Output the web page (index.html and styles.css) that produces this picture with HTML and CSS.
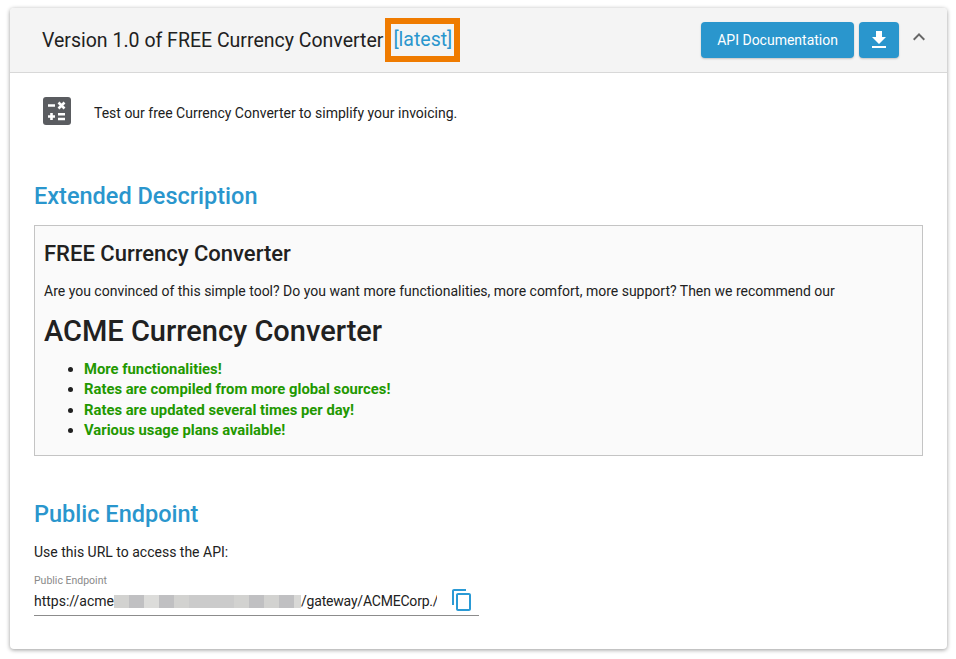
FILE: index.html
```html
<!DOCTYPE html>
<html lang="en" dir="ltr">
  <head>
    <meta charset="utf-8">
    <title>FREE Currency Converter</title>
    <link rel="stylesheet" href="styles.css">
  </head>
  <body>
    <div class="card">
      <div class="card-header">
        <div class="title">
          <span>Version 1.0 of FREE Currency Converter</span>
          <a class="latest">[latest]</a>
        </div>
        <div class="actions">
          <button class="btn">API Documentation</button>
          <button class="btn btn-icon">
            <svg width="24" height="24" viewBox="0 0 24 24"><path fill="#fff" d="M19 9h-4V3H9v6H5l7 7 7-7zM5 18v2h14v-2H5z"/></svg>
          </button>
          <span class="collapse">
            <svg width="24" height="24" viewBox="0 0 24 24"><path fill="#666" d="M12 8l-6 6 1.41 1.41L12 10.83l4.59 4.58L18 14z"/></svg>
          </span>
        </div>
      </div>
      <div class="card-body">
        <div class="summary">
          <svg class="calc" width="28" height="28" viewBox="0 0 28 28">
            <rect width="28" height="28" rx="3" fill="#5a5c60"/>
            <path fill="none" stroke="#fff" stroke-width="2.600" d="M5 8.500h7M15.500 5.500l6 6M21.500 5.500l-6 6M5 19.500h7M8.500 16v7M15 17.300h7M15 22h7"/>
          </svg>
          <span class="summary-text">Test our free Currency Converter to simplify your invoicing.</span>
        </div>

        <h2 class="section-title first">Extended Description</h2>
        <div class="description">
          <h3>FREE Currency Converter</h3>
          <p>Are you convinced of this simple tool? Do you want more functionalities, more comfort, more support? Then we recommend our</p>
          <h1>ACME Currency Converter</h1>
          <ul>
            <li><b>More functionalities!</b></li>
            <li><b>Rates are compiled from more global sources!</b></li>
            <li><b>Rates are updated several times per day!</b></li>
            <li><b>Various usage plans available!</b></li>
          </ul>
        </div>

        <h2 class="section-title">Public Endpoint</h2>
        <p class="hint">Use this URL to access the API:</p>
        <div class="field">
          <label>Public Endpoint</label>
          <div class="field-row">
            <div class="url">
              <span>https://acme</span>
              <span class="blur">
                <i class="l"></i><i class="d"></i><i class="p"></i><i class="d"></i><i class="l"></i><i class="m"></i><i class="m"></i><i class="m"></i><i class="l"></i><i class="d"></i><i class="l"></i><i class="d"></i><i class="s"></i>
              </span>
              <span class="url-tail">/gateway/ACMECorp./</span>
            </div>
            <svg class="copy" width="24" height="24" viewBox="0 0 24 24"><path fill="#2a9ad5" d="M16 1H4c-1.100 0-2 .9-2 2v14h2V3h12V1zm3 4H8c-1.100 0-2 .9-2 2v14c0 1.100.9 2 2 2h11c1.100 0 2-.9 2-2V7c0-1.100-.9-2-2-2zm0 16H8V7h11v14z"/></svg>
          </div>
        </div>
      </div>
    </div>
  </body>
</html>
```

FILE: styles.css
```css
html, body {
  margin: 0;
  background: #fff;
}

body {
  padding: 8px 9px 10px 10px;
  font-family: Roboto, "Liberation Sans", sans-serif;
  font-size: 14px;
  color: #212121;
}

.card {
  background: #fff;
  border-radius: 4px;
  box-shadow: 0 1px 4px rgba(0, 0, 0, 0.4);
}

.card-header {
  display: flex;
  align-items: center;
  justify-content: space-between;
  height: 65px;
  padding: 0 16px 0 32px;
  background: #f4f4f4;
  border-bottom: 1px solid #d8d8d8;
  border-radius: 4px 4px 0 0;
  box-sizing: border-box;
}

.title {
  display: flex;
  align-items: center;
  gap: 2px;
  font-size: 19.500px;
}

.latest {
  padding: 4px 2px;
  border: 6px solid #ef7b00;
  line-height: 24px;
  color: #2a96cd;
}

.actions {
  display: flex;
  align-items: center;
  gap: 5px;
}

.btn {
  height: 36px;
  padding: 0 16px;
  border: 0;
  border-radius: 4px;
  background: #2a96cd;
  color: #fff;
  font-family: inherit;
  font-size: 14px;
  box-shadow: 0 1px 2px rgba(0, 0, 0, 0.2);
}

.btn-icon {
  display: flex;
  align-items: center;
  justify-content: center;
  width: 40px;
  padding: 0;
}

.collapse {
  display: flex;
  width: 24px;
  margin: -6px 0 0 3px;
}

.card-body {
  padding: 24px 24px 33px;
}

.summary {
  display: flex;
  align-items: center;
  gap: 23px;
  padding-left: 9px;
}

.summary-text {
  margin-top: 4px;
}

.section-title {
  margin: 42px 0 12px;
  font-size: 23.500px;
  font-weight: 500;
  line-height: 32px;
  color: #2a96cd;
}

.section-title.first {
  margin-top: 55px;
  margin-bottom: 13px;
}

.description {
  padding: 14px 9px 14px;
  background: #fafafa;
  border: 1px solid #c4c4c4;
}

.description h3 {
  margin: 0;
  font-size: 22px;
  font-weight: 500;
  line-height: 28px;
}

.description p {
  margin: 13px 0 0;
  line-height: 20px;
}

.description h1 {
  margin: 12px 0 0;
  font-size: 29px;
  font-weight: 500;
  line-height: 36px;
}

.description ul {
  margin: 10px 0 0;
  padding-left: 40px;
}

.description li {
  font-size: 14.800px;
  line-height: 20.400px;
}

.description b {
  color: #229800;
  font-weight: 700;
}

.hint {
  margin: 0;
  line-height: 20px;
}

.field {
  width: 445px;
  margin-top: 12px;
  border-bottom: 1px solid #8c8c8c;
}

.field label {
  display: block;
  font-size: 10.500px;
  line-height: 14px;
  color: #8a8a8a;
}

.field-row {
  display: flex;
  align-items: center;
  justify-content: space-between;
  height: 27px;
  padding-right: 5px;
}

.url {
  display: flex;
  align-items: center;
  width: 403px;
  overflow: hidden;
  white-space: nowrap;
}

.url-tail {
  letter-spacing: -0.200px;
}

.blur {
  display: flex;
  flex: none;
  height: 13px;
}

.blur i {
  width: 15px;
  height: 100%;
}

.blur .l { background: #d2d2d0; }
.blur .p { background: #dcdcda; }
.blur .m { background: #cbcbcb; }
.blur .d { background: #c0c0c2; }
.blur .s { width: 7px; background: #d8d8d6; }

.copy {
  flex: none;
  margin-top: -2px;
}
```
